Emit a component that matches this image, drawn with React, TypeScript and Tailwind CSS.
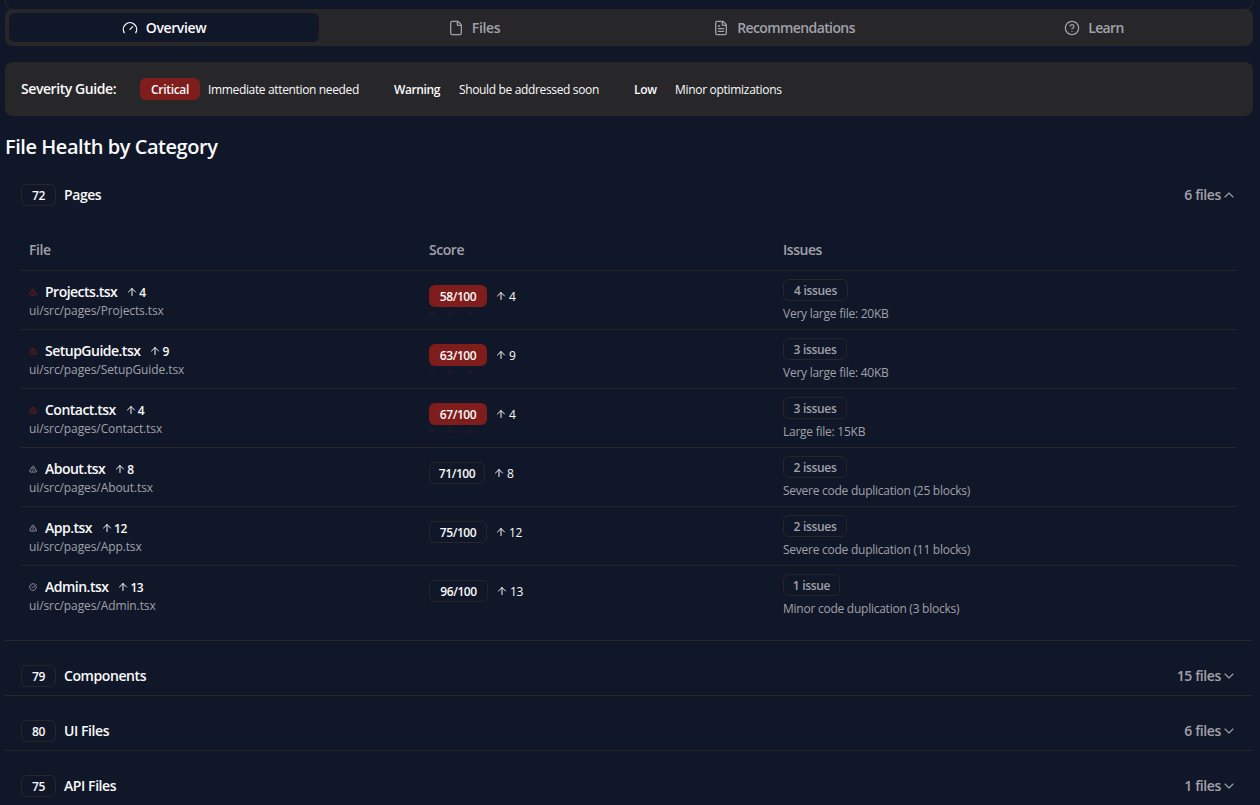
import { ArrowUp, ChevronDown, ChevronUp, CircleCheckBig, CircleHelp, File, FileText, Gauge, TriangleAlert } from "lucide-react";

type Row = { name: string; score: number; delta: number; issues: string; note: string };

const rows: Row[] = [
  { name: "Projects.tsx", score: 58, delta: 4, issues: "4 issues", note: "Very large file: 20KB" },
  { name: "SetupGuide.tsx", score: 63, delta: 9, issues: "3 issues", note: "Very large file: 40KB" },
  { name: "Contact.tsx", score: 67, delta: 4, issues: "3 issues", note: "Large file: 15KB" },
  { name: "About.tsx", score: 71, delta: 8, issues: "2 issues", note: "Severe code duplication (25 blocks)" },
  { name: "App.tsx", score: 75, delta: 12, issues: "2 issues", note: "Severe code duplication (11 blocks)" },
  { name: "Admin.tsx", score: 96, delta: 13, issues: "1 issue", note: "Minor code duplication (3 blocks)" },
];

const closed = [
  { score: 79, name: "Components", files: "15 files" },
  { score: 80, name: "UI Files", files: "6 files" },
  { score: 75, name: "API Files", files: "1 files" },
];

const tabs = [
  { name: "Overview", Icon: Gauge },
  { name: "Files", Icon: File },
  { name: "Recommendations", Icon: FileText },
  { name: "Learn", Icon: CircleHelp },
];

const badge = "flex h-[22px] w-fit items-center rounded-md border pt-px text-xs font-semibold whitespace-nowrap";

function CategoryHeader({ score, name, files, open }: { score: number; name: string; files: string; open?: boolean }) {
  const Chevron = open ? ChevronUp : ChevronDown;
  return (
    <div className="flex h-[22px] items-center px-4">
      <div className={`${badge} min-w-[35px] justify-center border-[#27272a] tracking-[-0.3px]`}>{score}</div>
      <span className="ml-2 text-sm font-semibold tracking-[-0.42px]">{name}</span>
      <span className="ml-auto flex items-center text-sm font-semibold tracking-[-0.38px] text-[#a1a1aa]">
        {files}
        <Chevron className="h-4 w-4" strokeWidth={1.7} />
      </span>
    </div>
  );
}

export default function App() {
  return (
    <div className="h-[805px] overflow-hidden bg-[#101728] pr-[7px] pl-[5px] font-['Open_Sans','Noto_Sans',sans-serif] text-[#fafafa]">
      <div className="h-[10px] rounded-b-lg border border-t-0 border-[#27272a]" />
      <div className="-mt-px grid h-[37px] grid-cols-4 rounded-lg bg-[#27272a] p-1">
        {tabs.map(({ name, Icon }, i) => (
          <div
            key={name}
            className={`flex items-center justify-center gap-2 rounded-md text-sm font-semibold ${i === 0 ? "bg-[#101728] tracking-[-0.38px]" : i === 1 ? "tracking-[-0.35px] text-[#a1a1aa]" : "tracking-[-0.6px] text-[#a1a1aa]"}`}
          >
            <Icon className="h-4 w-4" strokeWidth={1.9} />
            <span className="pt-px">{name}</span>
          </div>
        ))}
      </div>

      <div className="mt-4 flex h-[54px] items-center rounded-lg bg-[#27272a] pl-4 text-xs">
        <span className="w-[119px] text-sm font-semibold tracking-[-0.43px]">Severity Guide:</span>
        <div className={`${badge} min-w-[60px] justify-center border-transparent bg-[#7f1d1d] tracking-[-0.3px]`}>Critical</div>
        <span className="ml-2 w-[186px] pt-[2px] tracking-[-0.35px]">Immediate attention needed</span>
        <span className="w-[65px] pt-[2px] font-semibold tracking-[-0.4px]">Warning</span>
        <span className="w-[175px] pt-[2px] tracking-[-0.35px]">Should be addressed soon</span>
        <span className="w-[41px] pt-[2px] font-semibold tracking-[-0.3px]">Low</span>
        <span className="pt-[2px] tracking-[-0.3px]">Minor optimizations</span>
      </div>

      <h2 className="mt-[17px] text-xl leading-7 font-semibold tracking-[-0.45px]">File Health by Category</h2>

      <section className="mt-[23px] h-[457px] border-b border-[#27272a]">
        <CategoryHeader score={72} name="Pages" files="6 files" open />
        <div className="mx-4 mt-6">
          <div className="grid h-[41px] grid-cols-[400px_354px_1fr] items-center border-b border-[#27272a] pl-2 text-sm font-semibold tracking-[-0.45px] text-[#a1a1aa]">
            <span>File</span>
            <span>Score</span>
            <span>Issues</span>
          </div>
          {rows.map(({ name, score, delta, issues, note }) => {
            const critical = score < 70;
            const Status = score > 90 ? CircleCheckBig : TriangleAlert;
            return (
              <div key={name} className="grid h-[59px] grid-cols-[400px_354px_1fr] border-b border-[#27272a] pl-2 last:border-0">
                <div className="pt-[11px]">
                  <div className="flex h-5 items-center text-sm font-semibold tracking-[-0.51px]">
                    <Status className={`mr-2 h-2 w-2 ${critical ? "text-[#7f1d1d]" : "text-[#a1a1aa]"}`} strokeWidth={2.6} />
                    {name}
                    <span className="ml-[9px] flex items-center gap-0.5 text-xs">
                      <ArrowUp className="h-3 w-3" strokeWidth={2} />
                      <span className="-ml-px pt-px">{delta}</span>
                    </span>
                  </div>
                  <div className="mt-px text-xs leading-4 tracking-[-0.1px] text-[#a1a1aa]">ui/src/pages/{name}</div>
                </div>
                <div className="pt-[14px]">
                  <div className="flex items-center">
                    <div
                      className={`${badge} justify-center ${score === 71 ? "w-[56px]!" : score === 96 ? "w-[59px]!" : "w-[58px]!"} tracking-[-0.45px] ${critical ? "border-transparent bg-[#7f1d1d]" : "border-[#27272a]"}`}
                    >
                      {score}/100
                    </div>
                    <span className="ml-2 flex items-center gap-0.5 text-xs tracking-[-0.35px]">
                      <ArrowUp className="h-3 w-3" strokeWidth={2} />
                      <span className="pt-[2px]">{delta}</span>
                    </span>
                  </div>
                  {critical && (
                    <div className="mt-1 flex gap-[13px]">
                      <i className="h-1 w-1.5 rounded-full bg-[#1d1829]" />
                      <i className="h-1 w-1.5 rounded-full bg-[#1d1829]" />
                      <i className="h-1 w-1.5 rounded-full bg-[#1d1829]" />
                    </div>
                  )}
                </div>
                <div className="pt-2 text-[#a1a1aa]">
                  <div
                    className={`${badge} justify-center border-[#27272a] tracking-[-0.3px] ${issues === "1 issue" ? "w-[57px]!" : issues === "4 issues" ? "w-[65px]!" : "w-[64px]!"}`}
                  >
                    {issues}
                  </div>
                  <div className="mt-[5px] text-xs leading-4 tracking-[-0.25px]">{note}</div>
                </div>
              </div>
            );
          })}
        </div>
      </section>

      {closed.map((c) => (
        <section key={c.name} className="h-[55px] border-b border-[#27272a] pt-6">
          <CategoryHeader {...c} />
        </section>
      ))}
    </div>
  );
}
